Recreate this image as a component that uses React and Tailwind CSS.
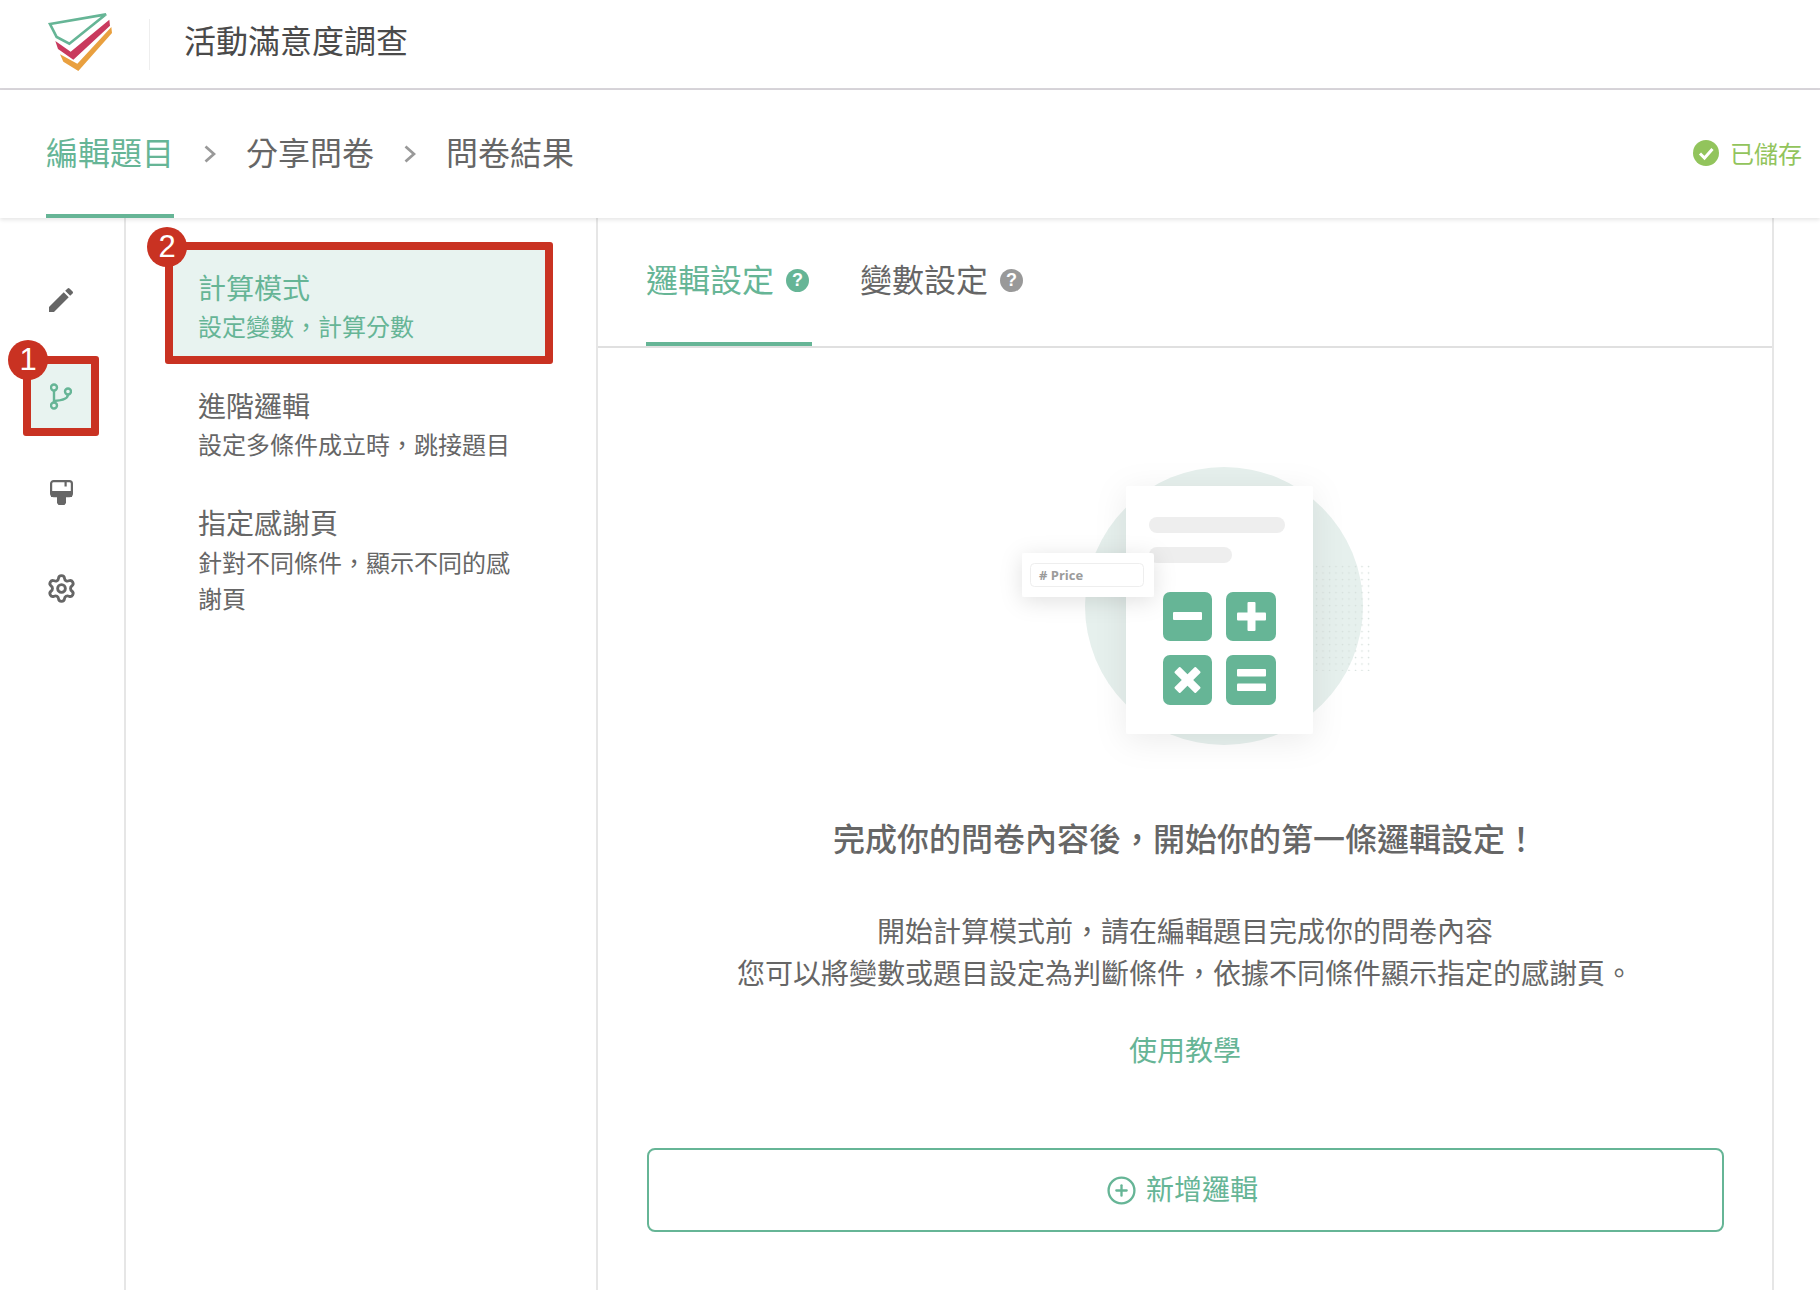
import React from 'react';
import { Settings, CirclePlus } from 'lucide-react';

const Logo = () => (
  <svg width="80" height="70" viewBox="0 0 240 210" className="block">
    <path d="M30 45 L198 16 L88 104 L50 84 Z" fill="none" stroke="#66b596" strokeWidth="8" strokeLinejoin="miter" />
    <path d="M46 96 L92 128 L208 32 L210 50 L100 152 L54 120 Z" fill="#c93a5e" />
    <path d="M60 136 L112 164 L214 54 L216 72 L115 186 L70 158 Z" fill="#e9a03f" />
  </svg>
);

const Chevron = () => (
  <svg width="12" height="18" viewBox="0 0 12 18" fill="none" stroke="#999999" strokeWidth="2.8" className="block">
    <path d="M1.5 1.5 L10 9 L1.5 16.5" />
  </svg>
);

const PencilIcon = () => (
  <svg width="32" height="32" viewBox="0 0 24 24" fill="#666666" className="block">
    <path d="M3 17.25V21h3.75L17.81 9.94l-3.75-3.75L3 17.25zM20.71 7.04a1 1 0 000-1.41l-2.34-2.34a1 1 0 00-1.41 0l-1.83 1.83 3.75 3.75 1.83-1.83z" />
  </svg>
);

const BranchIcon = () => (
  <svg width="22" height="27" viewBox="0 0 22 27" fill="none" stroke="#66b596" strokeWidth="2.4" className="block">
    <circle cx="4" cy="4.5" r="3" />
    <circle cx="4" cy="22.5" r="3" />
    <circle cx="18" cy="8.5" r="3" />
    <path d="M4 7.5V19.5" />
    <path d="M18 11.5C18 15.5 12 17.5 4 18" />
  </svg>
);

const PaintIcon = () => (
  <svg width="23" height="25" viewBox="0 0 23 25" fill="#666666" className="block">
    <rect x="1.1" y="1.1" width="20.8" height="15" rx="2.5" fill="none" stroke="#666666" strokeWidth="2.2" />
    <rect x="1" y="11" width="21" height="6" />
    <rect x="14.5" y="2" width="2.2" height="4.5" />
    <path d="M7 16h9v7l-1.5 2h-6L7 23z" />
  </svg>
);

const Badge = ({ n, className }) => (
  <div className={`absolute w-10 h-10 rounded-full bg-[#c93222] text-white flex items-center justify-center text-[31px] font-['Liberation_Sans',sans-serif] ${className}`}>
    {n}
  </div>
);

const Help = ({ color }) => (
  <span className={`w-[23px] h-[23px] rounded-full ${color} text-white text-[18px] leading-none font-bold flex items-center justify-center font-['Liberation_Sans',sans-serif]`}>
    ?
  </span>
);

const Illustration = () => (
  <svg width="400" height="350" viewBox="985 440 400 350" className="block">
    <defs>
      <filter id="paper" x="-30%" y="-30%" width="160%" height="160%">
        <feDropShadow dx="0" dy="6" stdDeviation="16" floodColor="#000000" floodOpacity="0.08" />
      </filter>
      <filter id="card" x="-40%" y="-80%" width="180%" height="260%">
        <feDropShadow dx="0" dy="4" stdDeviation="11" floodColor="#000000" floodOpacity="0.12" />
      </filter>
      <pattern id="dots" x="1315" y="565" width="6.5" height="6.5" patternUnits="userSpaceOnUse">
        <circle cx="1.5" cy="1.5" r="0.8" fill="#d5dfdb" />
      </pattern>
    </defs>
    <circle cx="1224" cy="606" r="139" fill="#e6f0ed" />
    <rect x="1315" y="565" width="56" height="106" fill="url(#dots)" />
    <rect x="1126" y="486" width="187" height="248" rx="3" fill="#ffffff" filter="url(#paper)" />
    <rect x="1149" y="517" width="136" height="16" rx="8" fill="#eeeeee" />
    <rect x="1149" y="547" width="83" height="16" rx="8" fill="#eeeeee" />
    <rect x="1022" y="553" width="132" height="44" rx="3" fill="#ffffff" filter="url(#card)" />
    <rect x="1030.5" y="563.5" width="113" height="23" rx="4" fill="#ffffff" stroke="#eeeeee" />
    <text x="1039" y="580" fontSize="13" fontWeight="700" fill="#9b9b9b" fontFamily="'Open Sans', sans-serif">
      # Price
    </text>
    <rect x="1163" y="592" width="49" height="49" rx="7" fill="#66b596" />
    <rect x="1226" y="592" width="50" height="49" rx="7" fill="#66b596" />
    <rect x="1163" y="655" width="49" height="50" rx="7" fill="#66b596" />
    <rect x="1226" y="655" width="50" height="50" rx="7" fill="#66b596" />
    <rect x="1173" y="612" width="29" height="8" rx="1" fill="#ffffff" />
    <rect x="1237" y="612.5" width="29" height="8" rx="1" fill="#ffffff" />
    <rect x="1247.5" y="602" width="8" height="29" rx="1" fill="#ffffff" />
    <g transform="rotate(45 1187.5 680)">
      <rect x="1172.5" y="676" width="30" height="8" rx="1" fill="#ffffff" />
      <rect x="1183.5" y="665" width="8" height="30" rx="1" fill="#ffffff" />
    </g>
    <rect x="1237" y="669" width="29" height="7.5" rx="1" fill="#ffffff" />
    <rect x="1237" y="683.5" width="29" height="7.5" rx="1" fill="#ffffff" />
  </svg>
);

const App = () => {
  return (
    <div className="w-[1820px] h-[1290px] overflow-hidden bg-white flex flex-col text-[#666666] font-['Noto_Sans_CJK_TC',sans-serif]">
      {/* top bar */}
      <header className="h-[90px] shrink-0 border-b-2 border-[#d8d5da] flex items-center">
        <div className="ml-[40px] -mt-[1px]">
          <Logo />
        </div>
        <div className="ml-[29px] w-px h-[51px] bg-[#eeeeee]" />
        <h1 className="ml-[34px] mb-[11px] text-[32px] leading-none font-normal text-[#4a4a4a]">活動滿意度調查</h1>
      </header>

      {/* steps */}
      <div className="h-[128px] shrink-0 relative z-10 shadow-[0_2px_4px_rgba(0,0,0,0.1)] flex items-center justify-between pl-[46px] pr-[18px] bg-white">
        <div className="flex items-center h-full">
          <div className="h-full border-b-4 border-[#66b596] text-[#66b596] text-[32px] flex items-center pb-[2px]">編輯題目</div>
          <div className="ml-[30px] mr-[30px]">
            <Chevron />
          </div>
          <div className="text-[32px] pb-[6px]">分享問卷</div>
          <div className="ml-[30px] mr-[30px]">
            <Chevron />
          </div>
          <div className="text-[32px] pb-[6px]">問卷結果</div>
        </div>
        <div className="flex items-center gap-[11px] text-[24px] text-[#92c45c] pb-[2px]">
          <svg width="26" height="26" viewBox="0 0 26 26" className="block">
            <circle cx="13" cy="13" r="13" fill="#92c45c" />
            <path d="M7 13.5 L11.5 18 L19.5 9" fill="none" stroke="#ffffff" strokeWidth="3" />
          </svg>
          已儲存
        </div>
      </div>

      <div className="flex-1 flex min-h-0">
        {/* icon rail */}
        <aside className="w-[126px] shrink-0 border-r-2 border-[#e6e6e6] pt-[34px]">
          <div className="h-24 ml-[23px] w-[76px] flex items-center justify-center">
            <PencilIcon />
          </div>
          <div className="h-24 ml-[23px] w-[76px] flex items-center justify-center relative">
            <div className="w-[76px] h-20 border-8 border-[#c93222] rounded-[3px] bg-[#e8f3f0] flex items-center justify-center">
              <BranchIcon />
            </div>
            <Badge n="1" className="-left-[15px] top-[-8px]" />
          </div>
          <div className="h-24 ml-[23px] w-[76px] flex items-center justify-center">
            <PaintIcon />
          </div>
          <div className="h-24 ml-[23px] w-[76px] flex items-center justify-center">
            <Settings size={31} strokeWidth={2.2} color="#666666" />
          </div>
        </aside>

        {/* logic menu */}
        <nav className="w-[472px] shrink-0 border-r-2 border-[#e6e6e6] pt-[24px] pl-[39px]">
          <div className="relative w-[388px] h-[122px] border-8 border-[#c93222] rounded-[3px] bg-[#e8f3f0] text-[#66b596] pt-[16px] pl-[25px]">
            <div className="text-[28px] leading-[42px]">計算模式</div>
            <div className="text-[24px] leading-[36px]">設定變數，計算分數</div>
            <Badge n="2" className="-left-[26px] -top-[23px]" />
          </div>
          <div className="pt-[20px] pb-[19px] pl-[33px] w-[355px]">
            <div className="text-[28px] leading-[42px]">進階邏輯</div>
            <div className="text-[24px] leading-[36px]">設定多條件成立時，跳接題目</div>
          </div>
          <div className="pt-[20px] pl-[33px] w-[350px]">
            <div className="text-[28px] leading-[42px] mb-[1px]">指定感謝頁</div>
            <div className="text-[24px] leading-[36px]">針對不同條件，顯示不同的感謝頁</div>
          </div>
        </nav>

        {/* content */}
        <main className="w-[1176px] shrink-0 border-r-2 border-[#e6e6e6] flex flex-col">
          <div className="h-[130px] shrink-0 border-b-2 border-[#e0e0e0] flex pl-[48px] gap-[48px] text-[32px]">
            <div className="h-full border-b-4 border-[#66b596] text-[#66b596] flex items-center gap-[12px] w-[166px]">
              <span className="mb-[4px]">邏輯設定</span>
              <Help color="bg-[#66b596]" />
            </div>
            <div className="h-full border-b-4 border-transparent flex items-center gap-[12px]">
              <span className="mb-[4px]">變數設定</span>
              <Help color="bg-[#999999]" />
            </div>
          </div>

          <div className="flex justify-center pt-[92px]">
            <Illustration />
          </div>

          <h2 className="mt-[23px] text-center text-[32px] leading-[48px] font-medium">完成你的問卷內容後，開始你的第一條邏輯設定！</h2>
          <p className="mt-[48px] text-center text-[28px] leading-[42px]">
            開始計算模式前，請在編輯題目完成你的問卷內容
            <br />
            您可以將變數或題目設定為判斷條件，依據不同條件顯示指定的感謝頁。
          </p>
          <div className="mt-[35px] text-center text-[28px] leading-[42px] text-[#66b596]">使用教學</div>

          <button className="mt-[78px] ml-[49px] mr-[48px] h-[84px] shrink-0 border-2 border-[#66b596] rounded-lg text-[#66b596] text-[28px] flex items-center justify-center gap-[9px] pr-[7px]">
            <CirclePlus size={31} strokeWidth={1.8} />
            <span className="mb-[4px]">新增邏輯</span>
          </button>
        </main>
      </div>
    </div>
  );
};

export default App;
